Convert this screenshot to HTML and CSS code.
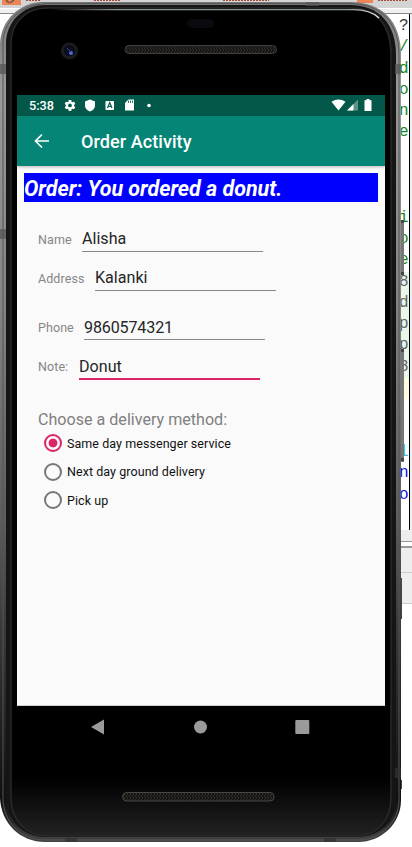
FILE: index.html
```html
<!DOCTYPE html>
<html lang="en">
<head>
<meta charset="utf-8">
<title>Order Activity</title>
<link rel="stylesheet" href="styles.css">
</head>
<body>
<div class="desktop">
  <div class="editor">
    <div class="tabs"><svg width="412" height="14" viewBox="0 0 412 14"><path fill="#ee8557" d="M2 0h19v5H2zM357 0h16v3h-16z"/><path d="M6 0l3 3M14 0l-4 3" stroke="#654" stroke-width="1.5"/><path d="M26 .5h15M94 .5h27M223 .5h46M378 .5h29" stroke="#a34b37" stroke-dasharray="2 1"/><path d="M0 8.5h412" stroke="#fff"/><path d="M0 13.5h412" stroke="#888"/></svg></div>
    <div class="code"><span class="dark">?</span><span>/</span><span>d</span><span>o</span><span>n</span><span>e</span><span></span><span></span><span></span><span>i</span><span>o</span><span>e</span><span class="gray">8</span><span class="gray">d</span><span class="gray">p</span><span class="gray">p</span><span class="gray">8</span><span class="yellow"></span><span></span><span></span><span class="cyan">l</span><span class="blue">n</span><span class="blue">o</span></div>
    <div class="footer"></div>
  </div>
</div>
<svg class="shell" width="412" height="847" viewBox="0 0 412 847">
  <defs>
    <linearGradient id="edge" x1="0" y1="0" x2="0" y2="1"><stop offset="0" stop-color="#777"/><stop offset=".1" stop-color="#999"/><stop offset=".35" stop-color="#858585"/><stop offset=".62" stop-color="#5c5c5c"/><stop offset=".75" stop-color="#383838"/><stop offset=".95" stop-color="#101010"/><stop offset="1" stop-color="#444"/></linearGradient>
    <linearGradient id="chin" x1="0" y1="0" x2="0" y2="1"><stop offset="0" stop-color="#000"/><stop offset=".93" stop-color="#000"/><stop offset="1" stop-color="#222"/></linearGradient>
    <linearGradient id="shine"><stop offset="0" stop-color="#aab5b3" stop-opacity="0"/><stop offset=".2" stop-color="#8b9694"/><stop offset=".9" stop-color="#8b9694"/><stop offset="1" stop-color="#eee"/></linearGradient>
    <pattern id="mesh" width="3" height="4" patternUnits="userSpaceOnUse"><path fill="#171614" d="M0 0h3v4H0z"/><path d="M0 0l2 2-2 2" fill="none" stroke="#38342f" stroke-width=".8"/></pattern>
  </defs>
  <path fill="#777" d="M400 220h4v55h-4zM400 349h4v113h-4z"/>
  <path fill="#444" d="M400 220h4v3h-4zM400 272h4v3h-4zM400 349h4v3h-4zM400 458h4v3h-4zM400 578h2v41h-2zM400 780h2v9h-2z"/>
  <path fill="url(#edge)" d="M43 2H350C382 2 401 21 401 55V800C401 823 382 842 358 842H45C20 842 1 823 0 798V43C1 20 20 2 43 2Z"/>
  <path fill="none" stroke="#555" d="M45 3.5H350C381 4 399 23 399 55V800C399 822 381 840 358 840H45C21 840 3 822 3 798V43C3 22 21 4 45 4"/>
  <path fill="#151515" d="M45 5H350C379 5 396 24 396 55V800C396 822 379 837 357 837H46C23 837 6 820 6 798V43C6 22 23 5 45 5Z"/>
  <path fill="url(#chin)" stroke="#292929" stroke-width="1.5" d="M47 8H350C377 8 391 25 391 55V797C391 819 378 836 356 836H47C25 836 11 819 11 797V44C11 23 25 8 47 8Z"/>
  <path fill="none" stroke="url(#shine)" stroke-width="1.3" d="M52 9.7H350Q370 9 379 18"/>
  <path fill="#555" opacity=".75" d="M0 64h6v10H0zM0 229h6v10H0zM395 64h6v10h-6zM306 2h13v4h-13z"/>
  <path fill="#333" opacity=".75" d="M395 768h6v10h-6zM65 838h12v4H65zM324 838h12v4h-12z"/>
  <rect x="187" y="19" width="27" height="9" rx="4.5" fill="#090a10"/>
  <circle cx="69.5" cy="51" r="8.5" fill="#1c1c20"/><circle cx="69.5" cy="50.5" r="5.5" fill="#0a0b1d"/><circle cx="71" cy="53" r="2" fill="#4b67d8"/><path d="M67 48l4 4" stroke="#30479f" stroke-width="1"/>
  <rect x="125" y="45.5" width="151.500" height="8" rx="4" fill="url(#mesh)" stroke="#42403e"/>
  <rect x="122.500" y="792.500" width="151.500" height="8.500" rx="4" fill="url(#mesh)" stroke="#484743"/>
</svg>
<main class="device">
  <div class="screen">
    <header class="status">
      <span class="clock">5:38</span>
      <svg width="368" height="21" viewBox="0 0 368 21" class="status-icons">
        <g transform="translate(46.500 4) scale(.54)" fill="#fff"><path d="M19.430 12.980c.04-.32.070-.64.070-.98s-.03-.66-.07-.98l2.110-1.650c.19-.15.24-.42.120-.64l-2-3.460c-.12-.22-.39-.3-.61-.22l-2.490 1a7.300 7.300 0 0 0-1.690-.98L14.500 2.420A.5.5 0 0 0 14 2h-4a.5.5 0 0 0-.49.420l-.38 2.650c-.61.250-1.170.590-1.690.980l-2.490-1c-.23-.09-.49 0-.61.220l-2 3.460c-.13.220-.07.490.120.640l2.110 1.650a8 8 0 0 0 0 1.960l-2.110 1.650c-.19.150-.24.420-.12.640l2 3.460c.12.220.39.300.61.220l2.490-1c.52.400 1.080.730 1.690.980l.38 2.650A.5.5 0 0 0 10 22h4a.5.5 0 0 0 .49-.42l.38-2.650c.61-.25 1.170-.59 1.690-.98l2.490 1c.23.090.49 0 .61-.22l2-3.460c.12-.22.070-.49-.12-.64zM12 15.500a3.500 3.500 0 1 1 0-7 3.500 3.500 0 0 1 0 7z"/></g>
        <path fill="#fff" d="M73 4.500l5 2v4c0 3-2 5-5 6-3-1-5-3-5-6v-4z"/>
        <rect x="88.500" y="6" width="8.500" height="9" rx=".7" fill="#fff"/><path d="M90.500 13l2.250-5.500L95 13M91.300 11.500h3" fill="none" stroke="#04584a" stroke-width="1.200"/>
        <path fill="#fff" d="M111.500 4.500h5.500v11h-9V8z"/><path stroke="#04584a" d="M111.500 5.500v2.500M113.500 5.500v2.500M115.500 5.500v2.500" stroke-width=".8"/>
        <circle cx="132" cy="10.500" r="1.800" fill="#fff"/>
        <path fill="#fff" d="M314.500 6.800Q321.500 2 328.500 6.800L321.500 15.500z"/>
        <path fill="#fff" opacity=".35" d="M330 15.500h11v-11z"/><path fill="#fff" d="M330 15.500h6.500V9z"/>
        <path fill="#fff" d="M349.500 4h3v1.300h2V16h-7V5.300h2z"/>
      </svg>
    </header>
    <div class="appbar">
      <svg width="16" height="16" viewBox="0 0 16 16"><path d="M15 8H2M8 1.500L1.500 8 8 14.500" fill="none" stroke="#fff" stroke-width="1.700"/></svg>
      <h1>Order Activity</h1>
    </div>
    <section class="content">
      <div class="order">Order: You ordered a donut.</div>
      <div class="field name"><label>Name</label><div class="input">Alisha</div></div>
      <div class="field address"><label>Address</label><div class="input">Kalanki</div></div>
      <div class="field phone"><label>Phone</label><div class="input">9860574321</div></div>
      <div class="field note"><label>Note:</label><div class="input active">Donut</div></div>
      <h2>Choose a delivery method:</h2>
      <div class="choice"><i class="radio on"></i><span>Same day messenger service</span></div>
      <div class="choice"><i class="radio"></i><span>Next day ground delivery</span></div>
      <div class="choice"><i class="radio"></i><span>Pick up</span></div>
    </section>
  </div>
  <nav>
    <svg width="368" height="42" viewBox="0 0 368 42" fill="#9a9a9a"><path d="M74 21l13-7.500v15z"/><circle cx="183.500" cy="21" r="6.500"/><rect x="278.300" y="14" width="14" height="14" rx="1"/></svg>
  </nav>
</main>
</body>
</html>
```
FILE: styles.css
```css
* { box-sizing: border-box; }
body { margin: 0; width: 412px; height: 847px; position: relative; overflow: hidden; background: #fff; font-family: Roboto, "Liberation Sans", sans-serif; }
svg { display: block; }
.desktop, .shell { position: absolute; top: 0; left: 0; }
.desktop { width: 412px; height: 847px; overflow: hidden; }
.editor { display: flex; flex-direction: column; }
.tabs { height: 14px; background: linear-gradient(#d4d4d4 8px, #f0f0f0 8px); }
.code { height: 516px; width: 12px; margin-left: 398px; padding: 2px 0 0 1px; border-right: 1px solid #000; box-shadow: 2px 0 #f0f0f0; font: 16px/21.3px "Liberation Mono", monospace; color: #16851b; }
.code span { display: block; height: 21.300px; white-space: nowrap; }
.code .dark { color: #333; }
.code .gray { color: #666; background: #e9f7e9; }
.code .yellow { background: #fffbe2; }
.code .cyan { color: #36b8df; }
.code .blue { color: #1010e8; }
.footer { height: 74px; margin-left: 398px; background: linear-gradient(#eee 11px, #999 11px 12px, #fff 12px 16px, #999 16px 18px, #eee 18px 42px, #ccc 42px 43px, #eee 43px 73px, #ccc 73px); }
.device { position: relative; width: 368px; margin-left: 17px; padding-top: 95px; }
.screen { height: 611px; background: #fafafa; border-bottom: 1px solid #cbd2d0; }
.status { height: 21px; background: #04584a; color: #fff; display: grid; }
.clock, .status-icons { grid-area: 1 / 1; }
.clock { padding-left: 12px; font-size: 12.700px; line-height: 22px; font-weight: 500; }
.appbar { height: 50px; background: #048576; color: #fff; display: flex; align-items: center; padding-left: 17px; box-shadow: 0 1px 3px #0004; }
h1 { margin: 2px 0 0 31px; font-size: 18px; line-height: 24px; font-weight: 500; letter-spacing: .08px; }
.content { padding: 7px 7px 0; }
.order { width: 354px; height: 29px; background: #00f; color: #fff; font-size: 21.500px; line-height: 32px; font-weight: 700; font-style: italic; white-space: nowrap; letter-spacing: -.03px; }
.field { display: flex; align-items: flex-start; margin-left: 14px; height: 29px; }
.field label { font-size: 12.500px; line-height: 16px; padding-top: 9px; color: #868686; letter-spacing: .08px; }
.input { width: 181px; height: 29px; border-bottom: 1px solid #888; color: #262626; font-size: 16.100px; line-height: 32px; }
.name label { width: 44px; }
.address label { width: 57px; }
.phone label { width: 46px; }
.note label { width: 41px; }
.name { margin-top: 21px; }
.address { margin-top: 10px; }
.phone { margin-top: 20px; }
.phone .input { line-height: 33px; letter-spacing: -.15px; }
.note { margin-top: 10px; }
.note .input { line-height: 33px; }
.input.active { height: 30px; border-bottom: 2px solid #dc2468; }
h2 { margin: 30px 0 0 14px; font-size: 16.100px; font-weight: 400; line-height: 22px; color: #808080; }
.choice { display: flex; align-items: center; height: 28.600px; margin-left: 19px; gap: 5.500px; color: #111; font-size: 12.500px; letter-spacing: .06px; }
h2 + .choice { margin-top: -2px; }
.radio { width: 18px; height: 18px; border: 2px solid #777; border-radius: 50%; margin-left: .5px; }
.radio.on { border-color: #dc2468; background: radial-gradient(circle, #dc2468 4px, transparent 4.800px); }
nav { height: 42px; }
```
